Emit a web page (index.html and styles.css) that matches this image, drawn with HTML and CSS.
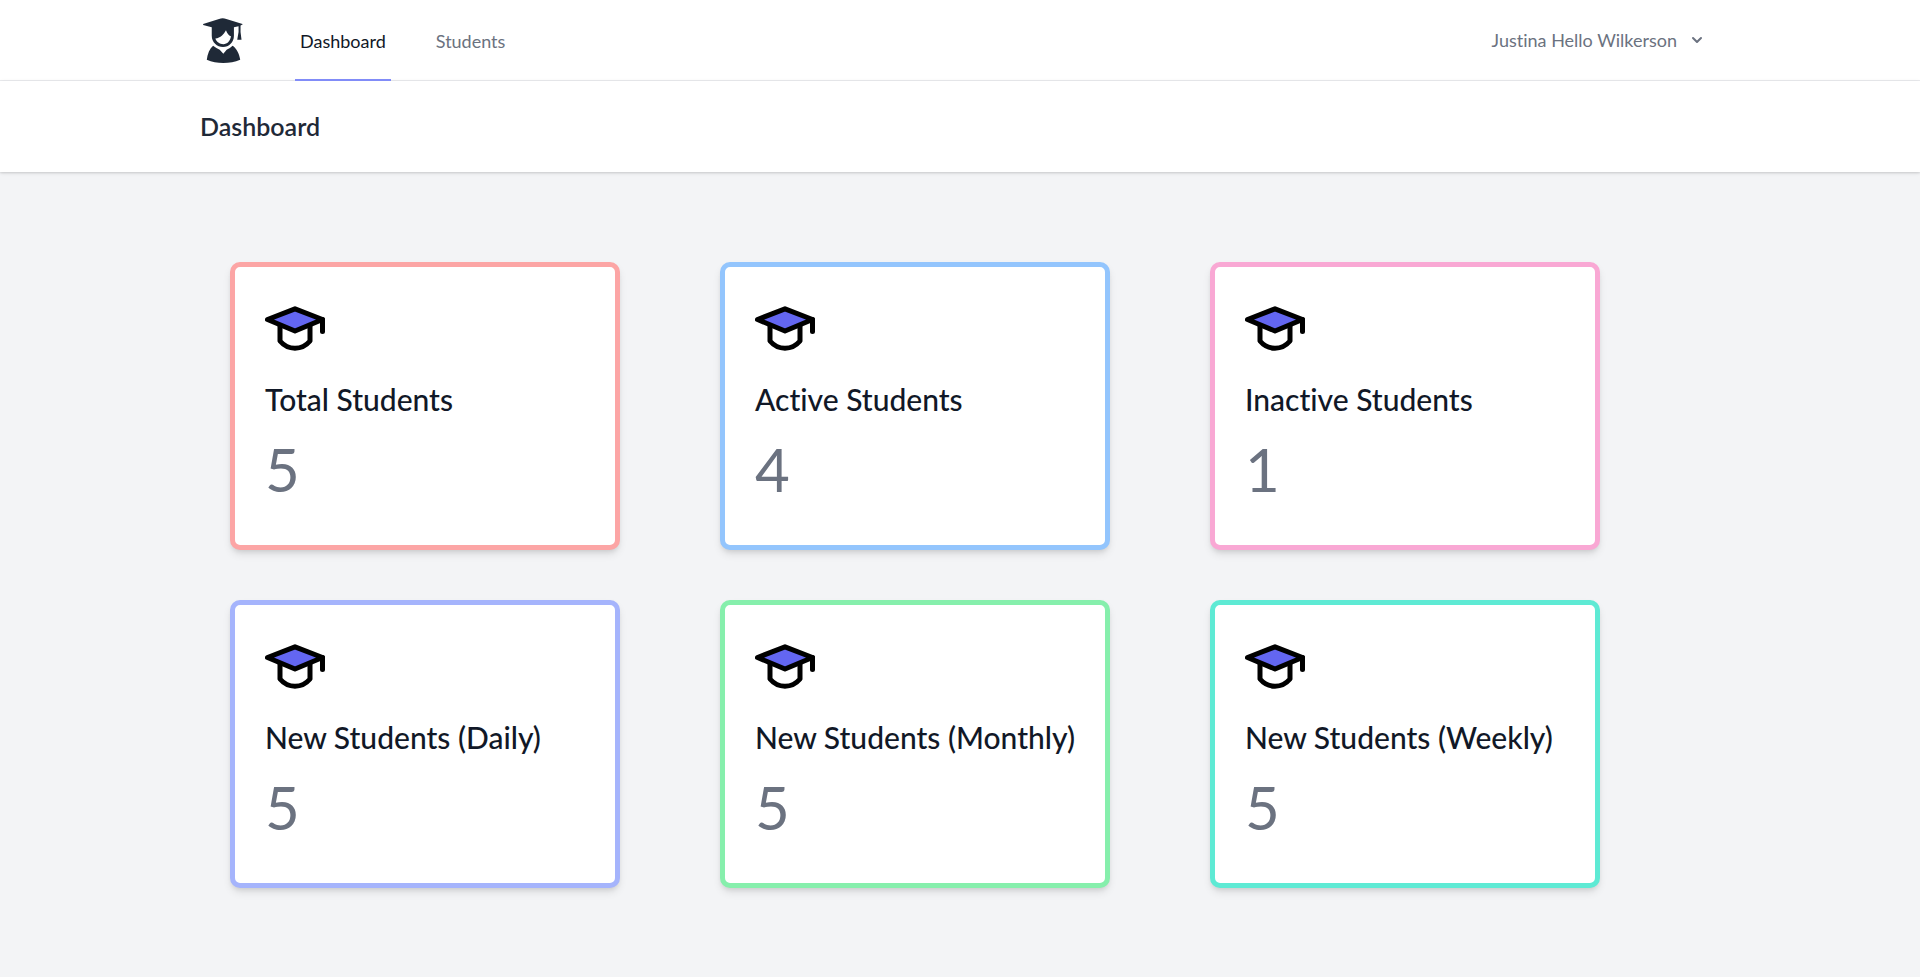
FILE: index.html
```html
<!DOCTYPE html>
<html lang="en">
<head>
<meta charset="utf-8">
<meta name="viewport" content="width=device-width, initial-scale=1">
<title>Dashboard</title>
<link rel="stylesheet" href="styles.css">
</head>
<body>
<svg class="sprite" aria-hidden="true">
  <symbol id="cap" viewBox="0 0 60 60">
    <path d="M30 11.800L57.500 22.500L30 34L2.500 22.500Z" fill="#6366f1" stroke="#000" stroke-width="5" stroke-linejoin="round"/>
    <path d="M57.500 22.500V34.500M15 28.500V44Q21 51.200 30 51.200T45 44V28.500" fill="none" stroke="#000" stroke-width="5" stroke-linecap="round" stroke-linejoin="round"/>
  </symbol>
</svg>
<nav class="nav">
  <div class="container nav-row">
    <a class="logo" href="#" aria-label="Home">
      <svg viewBox="0 0 120 136" width="40" height="45" fill="#1f2937" aria-hidden="true">
        <path fill-rule="evenodd" d="M0 18L48 3Q59 -1 70 3L119 18V20L113 23V42L116 66H103L107 42V25L93 28V54C93 74 78 88 60 88S26 74 26 54V28L0 21ZM37 62C53 60 62 50 69 37C72 46 77 53 84 55C82 69 73 79 61 79C50 79 40 72 37 62Z"/>
        <path d="M30 84Q42 93 50 96L61 108L71 96Q80 93 89 84C101 92 109 108 112 126Q88 136 61 136T11 126C13 108 20 93 30 84Z"/>
      </svg>
    </a>
    <a class="nav-link active" href="#" aria-current="page">Dashboard</a>
    <a class="nav-link" href="#">Students</a>
    <button class="user" type="button">Justina Hello Wilkerson
      <svg viewBox="0 0 20 20" width="20" height="20" fill="currentColor" aria-hidden="true"><path fill-rule="evenodd" d="M5.293 7.293a1 1 0 011.414 0L10 10.586l3.293-3.293a1 1 0 111.414 1.414l-4 4a1 1 0 01-1.414 0l-4-4a1 1 0 010-1.414z"/></svg>
    </button>
  </div>
</nav>
<header class="header">
  <div class="container"><h1 class="heading">Dashboard</h1></div>
</header>
<main class="container main">
  <div class="cards">
    <section class="card red"><svg class="icon" aria-hidden="true"><use href="#cap"/></svg><h2 class="title">Total Students</h2><p class="count">5</p></section>
    <section class="card blue"><svg class="icon" aria-hidden="true"><use href="#cap"/></svg><h2 class="title">Active Students</h2><p class="count">4</p></section>
    <section class="card pink"><svg class="icon" aria-hidden="true"><use href="#cap"/></svg><h2 class="title">Inactive Students</h2><p class="count">1</p></section>
    <section class="card indigo"><svg class="icon" aria-hidden="true"><use href="#cap"/></svg><h2 class="title">New Students (Daily)</h2><p class="count">5</p></section>
    <section class="card green"><svg class="icon" aria-hidden="true"><use href="#cap"/></svg><h2 class="title">New Students (Monthly)</h2><p class="count">5</p></section>
    <section class="card teal"><svg class="icon" aria-hidden="true"><use href="#cap"/></svg><h2 class="title">New Students (Weekly)</h2><p class="count">5</p></section>
  </div>
</main>
</body>
</html>
```
FILE: styles.css
```css
* { box-sizing: border-box; }
body {
  margin: 0;
  min-height: 100vh;
  background: #f3f4f6;
  color: #111827;
  font-family: Lato, "Open Sans", sans-serif;
  font-variant-ligatures: none;
}
h1, h2, p { margin: 0; }
.sprite { position: absolute; width: 0; height: 0; }
.container { max-width: 1600px; margin: 0 auto; padding: 0 40px; }

.nav { background: #fff; border-bottom: 1px solid #ebecef; }
.nav-row { display: flex; align-items: stretch; height: 80px; }
.logo { display: flex; align-items: center; margin: 0 52px 0 3px; }
.nav-link {
  display: flex;
  align-items: center;
  margin: 0 40px -1px 0;
  padding: 4px 5px 0;
  border-bottom: 2px solid transparent;
  color: #6b7280;
  font-size: 18px;
  line-height: 25px;
  text-decoration: none;
}
.active { border-color: #818cf8; color: #111827; }
.user {
  display: flex;
  align-items: center;
  gap: 10px;
  margin-left: auto;
  padding: 0 13px;
  border: 0;
  background: none;
  color: #6b7280;
  font: inherit;
  font-size: 18px;
}

.header { background: #fff; box-shadow: 0 1px 4px rgba(0, 0, 0, .1), 0 1px 2px rgba(0, 0, 0, .1); }
.header .container { padding-top: 30px; padding-bottom: 30px; }
.heading { color: #1f2937; font-size: 25px; font-weight: 600; line-height: 31px; }

.main { padding-top: 90px; padding-bottom: 90px; }
.cards {
  display: grid;
  grid-template-columns: repeat(3, 1fr);
  gap: 50px 100px;
  max-width: 1400px;
  padding-left: 30px;
}
.card {
  padding: 30px;
  border: 5px solid;
  border-radius: 10px;
  background: #fff;
  box-shadow: 0 5px 8px -1px rgba(0, 0, 0, .1), 0 3px 5px -2px rgba(0, 0, 0, .1);
}
.red { border-color: #fca5a5; }
.blue { border-color: #93c5fd; }
.pink { border-color: #f9a8d4; }
.indigo { border-color: #a5b4fc; }
.green { border-color: #86efac; }
.teal { border-color: #5eead4; }
.icon { display: block; width: 60px; height: 60px; margin-bottom: 22px; }
.title { margin-bottom: 13px; font-size: 30px; font-weight: 500; line-height: 40px; white-space: nowrap; }
.count { margin-bottom: 8px; color: #6b7280; font-size: 60px; line-height: 75px; }
```
